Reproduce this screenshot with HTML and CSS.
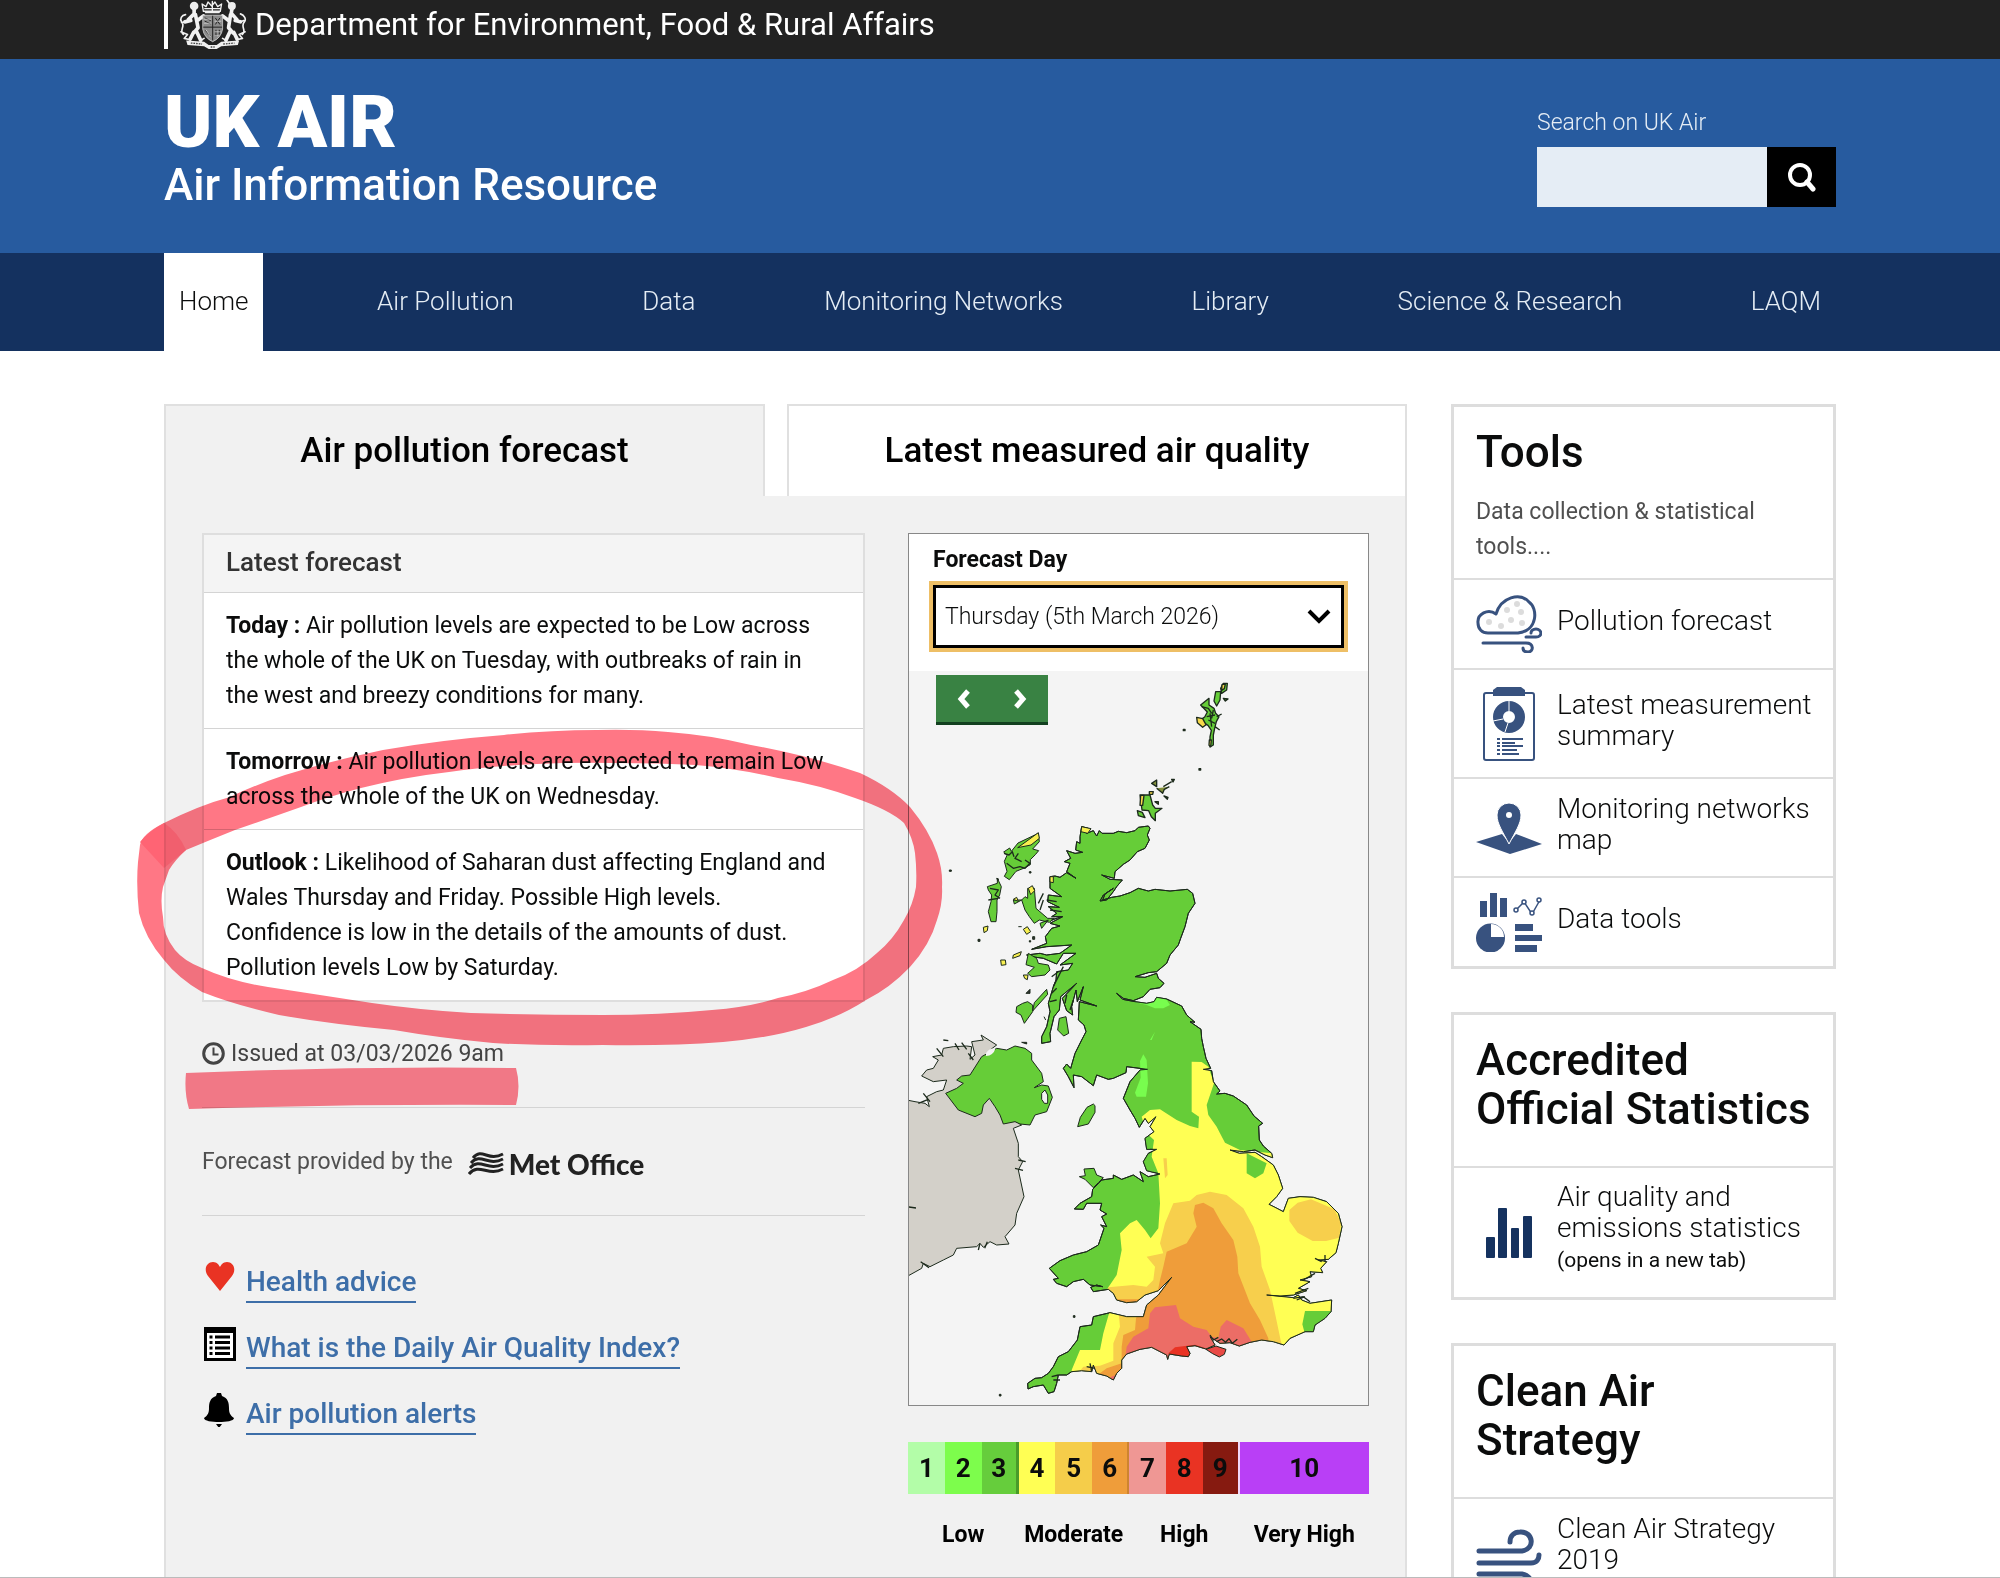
FILE: index.html
```html
<!DOCTYPE html>
<html lang="en">
<head>
<meta charset="utf-8">
<title>UK AIR - Air Information Resource</title>
<meta name="viewport" content="width=device-width, initial-scale=1">
<link rel="stylesheet" href="styles.css">
</head>
<body>
<div class="page">
<header>
  <div class="dept">
    <div class="wrap">
      <a class="dept-link" href="#">
        <svg class="crest" viewBox="24 0 210 148" aria-hidden="true">
          <g fill="none" stroke="#f2f2f2" stroke-linecap="round" stroke-linejoin="round">
            <path stroke-width="11" d="M72 20v22l-18 18M76 44l8 40-14 16M82 62l18-14M78 92l14 30M70 98l-10 20M62 62l-18 4"/>
            <path stroke-width="5" d="M46 66l-12 2M40 104c-16-10 8-26-6-38-6-8 0-20 12-22M60 120l-18-4 10-12-20-8M92 122l10-6"/>
            <path stroke-width="11" d="M188 18l-4 22 18 20M182 44l-6 40 14 16M176 62l-18-14M182 92l-14 30M192 98l10 20M196 62l16 4"/>
            <path stroke-width="5" d="M178 10l-8-12M212 66l10-4M218 104c14-10-8-26 6-38 6-8 0-20-12-24M200 120l18-4-10-12 18-8M168 122l-10-6"/>
            <path stroke-width="4" d="M100 34l-4-22 12 8 6-14 11 12 10-12 8 14 12-8-4 22zM104 26h46M106 38h42M127 4v28"/>
          </g>
          <circle cx="72" cy="18" r="13" fill="#eee"/><circle cx="186" cy="18" r="12" fill="#eee"/>
          <path d="M98 46h60v42q-4 26-30 38q-26-12-30-38z" fill="#8c8c8c"/>
          <g fill="none" stroke="#222" stroke-width="3"><path d="M128 46v76M98 82h60M104 54l18 8M104 64l18 8M136 54l14 20M150 54l-14 20M106 92l16 18M138 90v20M148 90v14"/></g>
          <g fill="none" stroke="#e8e8e8" stroke-width="2"><path d="M98 46h60v42q-4 26-30 38q-26-12-30-38zM102 58h22M102 70h22M134 64h20M108 90l14 22M134 96h18M134 108h12"/></g>
          <path d="M48 122l54 4 14 10h24l14-10 54-4-4 14-50 4-14 8h-24l-14-8-50-4z" fill="#f0f0f0"/>
          <path d="M62 130l34 3M160 133l34-3M122 142h12" stroke="#444" stroke-width="4" stroke-dasharray="5 3"/>
        </svg>
        <span>Department for Environment, Food &amp; Rural Affairs</span>
      </a>
    </div>
  </div>
  <div class="brand">
    <div class="wrap brand-row">
      <div>
        <h1 class="site-name">UK AIR</h1>
        <p class="site-tag">Air Information Resource</p>
      </div>
      <form class="search">
        <label for="q">Search on UK Air</label>
        <div class="search-row">
          <input id="q" type="text">
          <button type="button" aria-label="Search">
            <svg width="30" height="30" viewBox="0 0 30 30" fill="none" stroke="#fff"><circle cx="13" cy="13" r="10" stroke-width="4"/><path d="M20 20l6 7" stroke-width="5" stroke-linecap="round"/></svg>
          </button>
        </div>
      </form>
    </div>
  </div>
  <nav class="nav">
    <div class="wrap nav-row">
      <a class="current" href="#">Home</a><a href="#">Air Pollution</a><a href="#">Data</a><a href="#">Monitoring Networks</a><a href="#">Library</a><a href="#">Science &amp; Research</a><a href="#">LAQM</a>
    </div>
  </nav>
</header>

<main class="wrap main">
  <section>
    <div class="tabs">
      <a class="tab active" href="#">Air pollution forecast</a>
      <a class="tab" href="#">Latest measured air quality</a>
    </div>
    <div class="panel">
      <div class="left">
        <div class="forecast">
          <h2>Latest forecast</h2>
          <p><strong>Today :</strong> Air pollution levels are expected to be Low across the whole of the UK on Tuesday, with outbreaks of rain in the west and breezy conditions for many.</p>
          <p><strong>Tomorrow :</strong> Air pollution levels are expected to remain Low across the whole of the UK on Wednesday.</p>
          <p><strong>Outlook :</strong> Likelihood of Saharan dust affecting England and Wales Thursday and Friday. Possible High levels. Confidence is low in the details of the amounts of dust. Pollution levels Low by Saturday.</p>
        </div>
        <p class="issued">
          <svg width="23" height="23" viewBox="0 0 23 23" fill="none" stroke="#444"><circle cx="11.500" cy="11.500" r="9.800" stroke-width="3"/><path d="M11.500 5.500v7h5" stroke-width="2"/></svg>
          Issued at 03/03/2026 9am
        </p>
        <p class="provider">Forecast provided by the
          <span class="met">
            <svg width="36" height="24" viewBox="0 0 36 24" fill="none" stroke="#222" stroke-width="3"><path d="M5 6C14-5 20 10 35 2M3 11C13 0 20 15 35 7M2 16C12 5 20 20 35 12M1 22C11 10 20 25 35 17"/></svg>
            Met Office
          </span>
        </p>
        <ul class="links">
          <li><svg width="32" height="34" viewBox="0 0 32 34"><path d="M16 30L4 15C-1 8 3 1 9 1c4 0 6 3 7 5 1-2 3-5 7-5 6 0 10 7 5 14z" fill="#e93323"/></svg><a href="#">Health advice</a></li>
          <li><svg width="32" height="34" viewBox="0 0 32 34"><path d="M0 0h32v34H0z"/><path d="M3 6h26v25H3z" fill="#fff"/><path d="M11 10h15M11 15.500h15M11 21h15M11 26.500h15M5.500 10h3M5.500 15.500h3M5.500 21h3M5.500 26.500h3" stroke="#000" stroke-width="3"/></svg><a href="#">What is the Daily Air Quality Index?</a></li>
          <li><svg width="32" height="34" viewBox="0 0 32 34"><path d="M13 0h4l1 3c6 2 7 7 7 12s1 7 5 10c0 3-8 4-15 4S0 28 0 25c4-3 5-5 5-10S6 5 12 3zM12 31h6l-3 4z"/></svg><a href="#">Air pollution alerts</a></li>
        </ul>
        <svg class="marker" width="820" height="400" viewBox="130 720 820 400" aria-hidden="true">
          <path fill="#ff7785" fill-rule="evenodd" d="M140 845Q142 834 164 823Q200 805 230 797Q255 785 285 775Q330 761 383 750Q440 740 504 735Q550 730 597 730Q635 729 668 732Q710 735 751 745Q810 756 860 773Q892 788 910 807Q929 830 937 853Q943 870 942 887Q943 903 937 920Q930 945 910 967Q890 988 866 1000Q840 1017 806 1027Q770 1038 723 1042Q670 1046 603 1045Q540 1046 493 1043Q440 1038 394 1030Q330 1024 279 1015Q235 1005 202 992Q178 978 164 960Q145 938 139 913Q136 885 138 862ZM169 870Q175 860 186 850Q210 840 235 830Q270 818 301 807Q330 796 361 788Q405 777 449 772Q490 766 537 764Q575 762 614 763Q660 763 696 765Q740 769 778 778Q820 785 855 798Q890 810 904 823Q913 838 915 853Q917 870 916 887Q913 905 904 920Q893 940 877 953Q858 971 833 980Q808 992 778 998Q750 1007 712 1010Q660 1015 603 1015Q535 1015 471 1013Q420 1010 372 1003Q320 995 268 987Q230 981 202 968Q184 961 175 950Q163 935 163 917Q160 900 163 887Z"/>
          <path fill="#ff6474" d="M140 842Q148 832 164 823Q178 832 186 850L164 868Z"/>
          <path fill="#ff7f8e" d="M186 1073Q350 1066 516 1068Q521 1086 516 1105Q350 1104 189 1109Q184 1092 186 1073Z"/>
        </svg>
      </div>
      <div class="right">
        <div class="mapbox">
          <div class="day">
            <label for="day">Forecast Day</label>
            <div class="select-wrap">
              <select id="day"><option>Thursday (5th March 2026)</option></select>
              <svg width="24" height="16" viewBox="0 0 24 16" fill="none" stroke="#000" stroke-width="4"><path d="M2 2l10 10L22 2"/></svg>
            </div>
          </div>
          <div class="map">
            <div class="step">
              <button type="button" aria-label="Previous day"><svg width="14" height="20" viewBox="0 0 14 20" fill="none" stroke="#fff" stroke-width="5"><path d="M11 2L4 10l7 8"/></svg></button>
              <button type="button" aria-label="Next day"><svg width="14" height="20" viewBox="0 0 14 20" fill="none" stroke="#fff" stroke-width="5"><path d="M3 2l7 8-7 8"/></svg></button>
            </div>
            <svg class="uk" viewBox="0 0 1377 2202" role="img" aria-label="Forecast map of the United Kingdom">
              <defs>
                <path id="gb" d="M545 20L565 25 560 40 580 32 590 48 598 32 606 40 640 40 655 34 680 38 705 32 715 22 745 18 750 25 742 45 748 60 735 85 712 95 690 120 670 133 645 155 643 175 605 165 630 178 667 180 650 200 640 215 620 240 600 243 610 225 640 205 615 222 608 240 635 232 660 228 690 218 715 205 745 213 765 208 810 213 862 208 878 220 885 250 865 280 855 320 842 355 835 375 810 405 800 430 770 455 745 458 705 470 735 472 770 460 775 475 792 490 780 503 750 508 730 530 700 542 670 535 650 520 668 538 705 545 740 550 762 545 770 532 800 537 845 558 860 585 885 607 870 605 903 628 905 655 910 680 918 715 932 745 910 748 935 752 940 785 960 813 950 822 975 820 1000 828 1040 855 1062 888 1088 910 1076 918 1078 960 1090 978 1115 1000 1118 1013 1095 1005 1065 990 1030 995 990 990 1018 1000 1065 997 1085 1010 1120 1035 1135 1065 1148 1105 1130 1130 1107 1153 1125 1162 1150 1175 1165 1135 1200 1130 1240 1132 1280 1145 1315 1180 1326 1220 1315 1270 1308 1298 1285 1318 1255 1320 1280 1325 1262 1345 1268 1358 1230 1355 1235 1370 1200 1380 1230 1385 1195 1405 1220 1412 1180 1425 1140 1428 1100 1425 1180 1433 1195 1425 1205 1440 1230 1450 1295 1440 1293 1475 1275 1495 1245 1515 1240 1535 1215 1535 1170 1555 1152 1575 1120 1565 1085 1560 1050 1567 1018 1578 990 1568 960 1570 930 1550 945 1575 918 1587 885 1577 860 1580 870 1600 865 1610 845 1608 808 1602 803 1618 800 1605 755 1582 720 1588 680 1602 665 1620 665 1645 650 1660 640 1680 620 1668 590 1660 580 1635 575 1655 545 1652 515 1655 500 1665 475 1665 470 1690 462 1715 445 1720 430 1695 400 1700 384 1707 383 1690 405 1675 425 1673 445 1660 460 1640 475 1610 505 1595 532 1560 540 1520 575 1515 580 1490 630 1478 680 1490 730 1490 740 1455 775 1425 815 1372 775 1412 735 1425 710 1445 680 1448 650 1440 640 1420 625 1408 580 1415 572 1402 590 1395 608 1400 570 1395 550 1378 520 1385 500 1400 470 1390 460 1378 475 1375 448 1345 480 1322 520 1305 560 1295 595 1275 612 1225 602 1215 620 1220 605 1190 620 1182 600 1170 605 1150 560 1150 550 1168 523 1167 540 1150 575 1130 578 1108 605 1080 640 1075 640 1065 665 1078 700 1065 730 1085 720 1055 745 1070 780 1062 740 1052 730 1025 745 1000 770 988 740 988 735 955 762 935 750 920 768 890 745 910 735 895 718 922 705 895 690 870 670 835 690 785 720 750 742 748 680 740 678 758 640 775 625 778 590 765 580 797 545 770 520 765 522 803 505 770 490 745 500 732 512 745 525 700 545 660 558 635 552 615 535 600 538 545 590 558 540 540 550 500 532 545 528 510 515 560 518 585 500 572 487 535 530 490 482 530 478 570 462 590 450 640 452 665 425 670 425 650 440 620 450 575 445 550 460 500 468 480 470 455 505 450 518 430 480 435 528 400 490 400 470 432 430 415 395 410 380 405 420 400 440 405 480 400 515 375 440 380 395 388 440 370 436 350 455 325 480 318 450 310 488 290 455 290 470 280 445 260 478 262 443 245 445 225 485 230 450 205 450 170 465 168 480 172 500 158 528 175 500 155 510 130 493 125 512 115 500 92 525 100 548 97 527 90 530 65 540 70 540 50Z"/>
                <clipPath id="land"><use href="#gb"/></clipPath>
              </defs>
              <g transform="translate(-27 447)" stroke="#1c2a1c" stroke-width="3" stroke-linejoin="round">
                <path fill="#d3d0c9" d="M20 840L45 845 75 850 88 860 80 830 110 815 130 810 140 780 100 785 65 768 80 750 100 745 115 720 98 710 125 705 130 685 160 680 200 678 215 680 210 718 225 705 215 665 250 660 243 645 290 675 270 690 265 710 340 900 365 915 340 925 355 970 355 1010 368 1025 355 1050 372 1130 350 1180 345 1215 315 1250 327 1272 290 1275 270 1265 250 1282 240 1270 230 1280 170 1285 160 1305 130 1320 90 1340 70 1330 65 1345 20 1370Z"/>
                <path fill="none" stroke-width="4" d="M20 1160l28 4M130 660l15 2M110 685l20 25M165 670l12 20M185 668l15 20M205 700l15 20M70 820l20 25M55 850l30-12M355 1020l22 5M345 1045l24 6M62 1325l25 18M240 1270l-5 20M262 1265l-8 20"/>
                <path fill="#66cd38" d="M137 820L170 805 190 790 170 780 185 768 210 765 245 710 290 685 320 690 345 678 375 685 395 700 395 720 425 760 430 785 403 803 425 795 445 798 457 832 440 875 405 885 390 915 360 912 345 905 310 912 300 885 285 860 268 835 250 855 245 880 225 890 175 870Z"/>
                <path fill="#f4f4f4" d="M425 820l10-10 8 15 0 25-10 0-8-12z"/>
                <path fill="#f4f4f4" stroke="none" d="M258 700q10-18 28-14q-6 20-28 22z"/>
                <use href="#gb" fill="#66cd38"/>
                <g clip-path="url(#land)" stroke="none">
                  <path fill="#78fd4e" d="M700 545l40 10 25 10 25 0 20-10-20-30-20 0zM765 635l-15 25 5 0zM730 703l-10 20 2 50-17 45 5 12 28 0 6-40-4-70z"/>
                  <path fill="#ffff54" d="M875 725L905 726 925 740 942 790 920 855 925 885 950 920 960 940 975 968 1020 990 1120 1000 1400 1100 1350 1500 1245 1600 1100 1700 515 1700 515 1650 540 1590 600 1590 610 1540 630 1470 600 1450 625 1402 650 1365 665 1290 660 1240 690 1210 710 1200 735 1230 752 1255 775 1225 780 1150 775 1060 755 1010 762 960 740 940 725 890 750 870 780 868 830 900 870 918 895 925 897 890 875 875Z"/>
                  <path fill="#66cd38" d="M1040 1000l60 30-10 30-25 15-25-15zM1215 1473l90 0 0 70-90 0-8-30zM735 1000l15 5 12 60-40 5zM735 950l15 0 0 38-15 0z"/>
                  <path fill="#f7cf4c" d="M820 1150L870 1142 890 1125 930 1115 980 1125 1030 1165 1060 1220 1080 1280 1085 1340 1110 1410 1125 1480 1145 1575 1145 1750 530 1750 530 1665 550 1640 600 1637 640 1622 640 1570 660 1520 655 1470 600 1460 625 1402 700 1395 740 1400 760 1380 765 1340 740 1310 790 1300 780 1270 795 1210ZM1168 1170l25-22 40-10 70 30 20 40-5 45-40 10-40 0-45-25-25-35zM790 1015l10 0 3 50-8 10z"/>
                  <path fill="#ef9d3a" d="M885 1155L910 1148 940 1165 965 1210 1000 1260 1012 1310 1015 1360 1050 1450 1080 1500 1105 1555 1105 1700 600 1700 600 1660 620 1645 665 1630 665 1580 670 1545 705 1530 708 1495 725 1460 770 1430 780 1380 790 1340 800 1295 860 1270 890 1220 880 1180ZM650 1438l70 0-10 12-60 0z"/>
                  <path fill="#ec6d66" d="M750 1480L765 1462 828 1455 840 1495 880 1520 920 1530 935 1550 955 1555 962 1520 980 1500 1030 1525 1055 1565 1020 1620 675 1620 680 1580 700 1550 745 1525ZM630 1672l30-12-10 30z"/>
                  <path fill="#e93323" d="M805 1600l20-18 60-8 30 10-10 50-80-5z"/>
                </g>
                <use href="#gb" fill="none"/>
                <path fill="none" stroke-width="4" d="M930 1545l10 15 15-8M950 1565l15-8 10 8M975 1568l12-12 10 14 15-12M560 1640l25 5M570 1630l5 25M455 1670l20-5M460 1680l20 0M1180 1435l30-5 20 15M1190 1440l25-10M1275 1305l0 20M1245 1315l20 10M1210 1380l35-20M1185 1420l40-15"/>
                <path fill="#e94a45" d="M918 1588l30-10 30 10-5 15-15 8-20-10z"/>
                <g fill="#66cd38">
                  <path d="M580 852l5 5 0 20-20 35-32 8 8-28 20-30z"/>
                  <path d="M538 1070l18-3-4-20 30-2 8 20 20 8-15 15-15 15-25-25zM478 595l20-5 8 50-15 8-18-18z"/>
                  <path d="M440 508l3 15-45 50 5-25zM350 560l18-10 15-5 15 10 0 20-25 35-10-25-15-8z"/>
                  <path d="M385 400l25 15 5 15 30 5 5 15-15 15-40 5-12-10 20-18-25-8z"/>
                  <path d="M340 240l25 0 10-10 8 5 0-30 20 0 5 60 35 30 20 0-15 12-30-7-15 10-15-20-13-20-10-30-22 12zM420 310l25-10-20 25z"/>
                  <path d="M415 40l3 25-20 22 18 5-10 12-15 15 0 15-18 10-25 10-20 25-15-10 8-15-8-30 8-18-10-10 18-12 5 10 20-25z"/>
                  <path d="M262 200l30-10 0-15 12 25-5 25-8 15 0 35-3 30-15 0-8-30 8-30 2-20-10-15z"/>
                </g>
                <g fill="#f8ef50">
                  <path d="M415 38l3 17-25 20-40 8 25-18zM385 205l12-8 7 15-12 12zM370 328l12-8 10 15-12 8zM340 405l24-10-4 12-22 8zM302 420l14 0 2 14-14 2zM370 465l14 0-2 14-8-4zM250 322l14-4-2 14-10 6zM545 20l28 6-10 14-20-5zM450 170l10 0 0 18-10-2zM340 238l10-6 5 12z"/>
                </g>
                <path fill="#333" d="M148 150h6v4h-6zM234 358h6v6h-6zM365 667l15 0 0 5zM388 155h5v4h-5zM398 350h6v8h-6zM355 320h10M378 520l12-12 0 12zM432 590l5 10M520 1487h5v5h-5zM298 1723h5v5h-5zM290 175l6 2-3 4zM388 362h4v4h-4z"/>
                <path fill="none" stroke-width="4" d="M312 100l15 5 10-10 5 15M320 130l20 15 20-5 15 5 15-15-15-10M355 100l-10 15 20 10M270 205l25 5-10 15 15 10M265 240l30-5M415 250l15-30M420 270l10-30M440 240l30 5M450 270l35 5M455 300l30-10M460 500l30-60M455 470l20-15M455 520l15-15M450 545l20-5M495 550l5-25M510 570l10-30"/>
              </g>
              <g transform="translate(-57 -453)" stroke="#1c2a1c" stroke-width="4" fill="#66cd38" stroke-linejoin="round">
                <path d="M1000 490l12 0-2 20-15 10-3-15zM977 515l15 0-2 25-10 18-8-15zM932 555l25-20 0 20 15 10 5 15 10 10-8 15-5 20-4 20 0 30-10 6 0-30 4-20-10-15-25-15 15-10 8-15zM980 590l15-8M975 620l14 10M1000 535l14 2-8 6z"/>
                <path fill="none" d="M935 560l20 5 10 15M950 590l25-5M955 600l20 10M960 580l5 40M970 570l-5 25"/>
                <path d="M750 825l30 0 8 30 8 10 20 0-20 15 0 22-12-12-8-18-20-2zM742 872l15 5 8 16-20-6z"/>
                <path fill="#f8d94c" d="M920 592l18 4 10 18-10 8-16-14zM752 826l10 0-4 30-8 0zM778 815l12 0-2 8-10 0zM996 494l10-2-3 14-8 5zM958 660l6 0-2 20-5-4z"/>
                <path fill="#85913c" d="M785 790l15-10 0 20zM820 800l25-15M845 778l8 0-4 8zM800 805l18 15 5-12 15-8M822 828l12 4-2 6zM795 845l10 0 0 8zM880 628h5v4h-5zM927 746h5v4h-5z"/>
              </g>
            </svg>
          </div>
        </div>
        <ol class="scale">
          <li class="b1">1</li><li class="b2">2</li><li class="b3">3</li><li class="b4">4</li><li class="b5">5</li><li class="b6">6</li><li class="b7">7</li><li class="b8">8</li><li class="b9">9</li><li class="b10">10</li>
        </ol>
        <div class="bands"><span>Low</span><span>Moderate</span><span>High</span><span>Very High</span></div>
      </div>
    </div>
  </section>

  <aside class="side">
    <section class="card">
      <div class="card-head"><h2>Tools</h2><p>Data collection &amp; statistical tools....</p></div>
      <a class="item item-s" href="#">
        <svg width="66" height="58" viewBox="0 0 66 58" fill="none" stroke="#38527f" stroke-width="3" stroke-linecap="round"><path d="M12 38H42c20-2 20-25 11-31C44-3 25 2 20 19C12 13 1 19 2 28c0 6 4 10 10 10zM7 48H50c8 0 8 9 2 9-3 0-5-1-5-4M50 42H60c7 0 6-8 0-8-3 0-5 2-5 4" stroke-linejoin="round"/><g fill="#dcdcdc" stroke="none"><circle cx="13" cy="27" r="3"/><circle cx="25" cy="31" r="3"/><circle cx="31" cy="15" r="3"/><circle cx="41" cy="9" r="3"/><circle cx="45" cy="17" r="3"/><circle cx="35" cy="25" r="3"/><circle cx="46" cy="28" r="3"/></g></svg>
        <span>Pollution forecast</span></a>
      <a class="item item-l" href="#">
        <svg width="66" height="76" viewBox="0 0 66 76"><rect x="8" y="7" width="50" height="67" rx="2" fill="none" stroke="#38527f" stroke-width="2"/><path d="M17 10V4l4-3h24l4 3v6z" fill="#38527f"/><circle cx="33" cy="31" r="11" fill="none" stroke="#38527f" stroke-width="10"/><path d="M33 15v10M29 46l3-9M17 35l10-2" stroke="#fff"/><path d="M26 53h21M26 57h13M26 60h21M26 64h15M26 68h17M21 53h3M21 57h3M21 60h3M21 64h3M21 68h3" stroke="#38527f" stroke-width="2"/></svg>
        <span>Latest measurement summary</span></a>
      <a class="item item-m" href="#">
        <svg width="66" height="52" viewBox="0 0 66 52" fill="#38527f"><path d="M26 32L0 40l34 12 32-10-26-10-7 9z"/><path d="M33 42C27 30 21 22 21 13a12 12 0 0 1 24 0c0 9-6 17-12 29z" stroke="#fff" stroke-width="1"/><circle cx="33" cy="13" r="3" fill="#fff"/></svg>
        <span>Monitoring networks map</span></a>
      <a class="item item-s" href="#">
        <svg width="66" height="60" viewBox="0 0 66 60" fill="#38527f"><path d="M4 9h7v16H4zM14 1h7v24h-7zM24 6h7v19h-7zM39 32h18v7H39zM39 43h27v6H39zM39 53h22v7H39z"/><circle cx="14.500" cy="46" r="14.500"/><path d="M15 45V32a13 13 0 0 1 13 13z" fill="#fff"/><g fill="#fff" stroke="#38527f" stroke-width="1.500"><path fill="none" d="M40 18l8-8 8 12 8-14"/><circle cx="40" cy="18" r="2"/><circle cx="48" cy="10" r="2"/><circle cx="56" cy="21" r="2"/><circle cx="63" cy="8" r="2"/></g></svg>
        <span>Data tools</span></a>
    </section>
    <section class="card">
      <div class="card-head tall"><h2>Accredited Official Statistics</h2></div>
      <a class="item item-xl" href="#">
        <svg width="66" height="52" viewBox="0 0 66 52" fill="#15325f"><rect x="10" y="30" width="9" height="21" rx="1"/><rect x="22" y="1" width="9" height="50" rx="1"/><rect x="35" y="21" width="8" height="30" rx="1"/><rect x="47" y="9" width="9" height="42" rx="1"/></svg>
        <span>Air quality and emissions statistics <small>(opens in a new tab)</small></span></a>
    </section>
    <section class="card">
      <div class="card-head tall"><h2>Clean Air Strategy</h2></div>
      <a class="item item-top" href="#">
        <svg width="66" height="78" viewBox="0 -16 66 78" fill="none" stroke="#38527f" stroke-width="5" stroke-linecap="round"><path d="M3 22H46c14-2 11-20-2-19-6 0-10 4-10 10M3 34H55c6 0 8-4 8-8M3 45H46c12 2 11 15 1 15"/></svg>
        <span>Clean Air Strategy 2019</span></a>
    </section>
  </aside>
</main>
</div>
</body>
</html>
```

FILE: styles.css
```css
* { box-sizing: border-box; }
body { margin: 0; background: #fff; color: #0b0c0c; font-family: Roboto, "Liberation Sans", sans-serif; font-size: 23px; }
h1, h2, p, ul, ol { margin: 0; padding: 0; list-style: none; }
a { color: inherit; text-decoration: none; }
svg { flex: none; }
.page { height: 100vh; overflow: hidden; border-bottom: 1px solid #bbb; }
.wrap { width: calc(100% - 328px); margin: 0 auto; }

.dept { background: #222; color: #fff; height: 59px; }
.dept-link { display: inline-flex; align-items: center; gap: 7px; height: 49px; border-left: 4px solid #fff; padding-left: 10px; font-size: 31px; }
.crest { width: 70px; height: 49px; }
.brand { background: #275b9f; color: #fff; }
.brand-row { display: flex; justify-content: space-between; padding: 25px 0 42px; }
.site-name { font-size: 73px; line-height: 76px; font-weight: 900; }
.site-tag { font-size: 44px; line-height: 51px; font-weight: 500; }
.search { width: 299px; padding-top: 24px; font-weight: 300; }
.search label { display: block; line-height: 30px; margin-bottom: 9px; color: #e5edf5; }
.search-row { display: flex; height: 60px; }
.search input { flex: 1; min-width: 0; border: 0; background: #e5edf5; padding: 0 12px; font: inherit; }
.search button { width: 69px; border: 0; background: #000; padding: 0; display: grid; place-items: center; }
.nav { background: #14315f; }
.nav-row { display: flex; justify-content: space-between; }
.nav a { padding: 0 15px; line-height: 96px; padding-bottom: 2px; font-size: 26px; font-weight: 300; color: #e5edf5; }
.nav .current { background: #fff; color: #0b0c0c; }

.main { display: grid; grid-template-columns: minmax(0, 1fr) 385px; gap: 44px; padding-top: 53px; align-items: start; }
.tabs { display: grid; grid-template-columns: 601fr 620fr; gap: 22px; }
.tab { height: 92px; border: 2px solid #e0e0e0; border-bottom: 0; text-align: center; line-height: 90px; font-size: 35px; font-weight: 500; color: #000; }
.tab.active { background: #f1f1f1; }
.panel { display: grid; grid-template-columns: minmax(0, 1fr) 461px; gap: 43px; padding: 37px 36px 80px; background: #f1f1f1; border: 2px solid #e0e0e0; border-top: 0; }
.left { position: relative; }
.forecast { border: 2px solid #dedede; background: #fff; line-height: 35px; }
.forecast h2 { background: #f4f4f4; padding: 10px 22px 12px; font-size: 26px; font-weight: 500; color: #333; }
.forecast p { border-top: 1px solid #d4d4d4; padding: 15px 34px 15px 22px; }
.issued { display: flex; align-items: center; gap: 6px; padding: 34px 0 36px; line-height: 35px; color: #444; border-bottom: 1px solid #d4d4d4; }
.provider { display: flex; align-items: center; gap: 15px; height: 108px; color: #505050; border-bottom: 1px solid #d4d4d4; }
.met { display: flex; align-items: center; gap: 5px; font: 900 28px/30px Lato, sans-serif; color: #222; padding-top: 4px; }
.links { padding: 45px 0 0 2px; }
.links li { display: flex; align-items: flex-start; gap: 10px; height: 66px; }
.links a { font-size: 28px; line-height: 38px; font-weight: 500; color: #3d6ea8; border-bottom: 2px solid #3d6ea8; margin-top: 2px; }
.links svg { width: 32px; }
.marker { position: absolute; left: -72px; top: 187px; mix-blend-mode: multiply; pointer-events: none; }

.mapbox { border: 1px solid #888; background: #f4f4f4; }
.day { background: #fff; padding: 9px 22px 23px; }
.day label { display: block; font-weight: 700; line-height: 34px; margin: 0 2px 8px; }
.select-wrap { display: grid; align-items: center; margin: 0 2px; }
.select-wrap > * { grid-area: 1 / 1; }
.select-wrap svg { justify-self: end; margin-right: 13px; pointer-events: none; }
select { appearance: none; width: 100%; height: 63px; border: 3px solid #000; border-radius: 0; outline: 4px solid #eebf66; background: #fff; padding: 0 9px; font: 300 23px Roboto, sans-serif; color: #0b0c0c; }
.map { position: relative; }
.step { position: absolute; left: 27px; top: 4px; display: flex; background: #398243; border-bottom: 3px solid #12401f; }
.step button { width: 56px; height: 47px; border: 0; background: none; padding: 0; display: grid; place-items: center; }
.uk { display: block; width: 100%; height: auto; }
.scale { display: grid; grid-template-columns: repeat(9, 37fr) 130fr; margin-top: 36px; line-height: 52px; text-align: center; font-size: 26px; font-weight: 700; }
.b1 { background: #b3fda8; } .b2 { background: #7dfd4c; } .b3 { background: #66cd3c; border-right: 3px solid #4a9a2a; }
.b4 { background: #ffff54; } .b5 { background: #f5cd4a; } .b6 { background: #ef9d3a; border-right: 2px solid #cd8430; }
.b7 { background: #ef9794; } .b8 { background: #e93323; } .b9 { background: #861a10; border-right: 2px solid #f1d8f8; } .b10 { background: #b93ff6; }
.bands { display: grid; grid-template-columns: repeat(3, 111fr) 130fr; padding-top: 23px; line-height: 36px; text-align: center; font-weight: 700; color: #000; }

.side { display: grid; gap: 43px; }
.card { border: 3px solid #ddd; background: #fff; }
.card-head { padding: 21px 18px 14px 22px; color: #505050; line-height: 35px; }
.card-head h2 { font-size: 44px; line-height: 49px; font-weight: 500; color: #0b0c0c; }
.card-head p { padding-top: 17px; }
.card-head.tall { padding: 21px 18px 32px 22px; }
.item { display: flex; align-items: center; gap: 15px; padding: 0 15px 0 22px; border-top: 2px solid #ddd; font-size: 28px; line-height: 31px; font-weight: 300; }
.item span { padding-bottom: 7px; }
.item small { display: block; font-size: 21px; line-height: 35px; font-weight: 400; }
.item-s { height: 90px; } .item-m { height: 99px; } .item-l { height: 109px; } .item-xl { height: 131px; }
.item-top { align-items: flex-start; padding-top: 14px; }
```
